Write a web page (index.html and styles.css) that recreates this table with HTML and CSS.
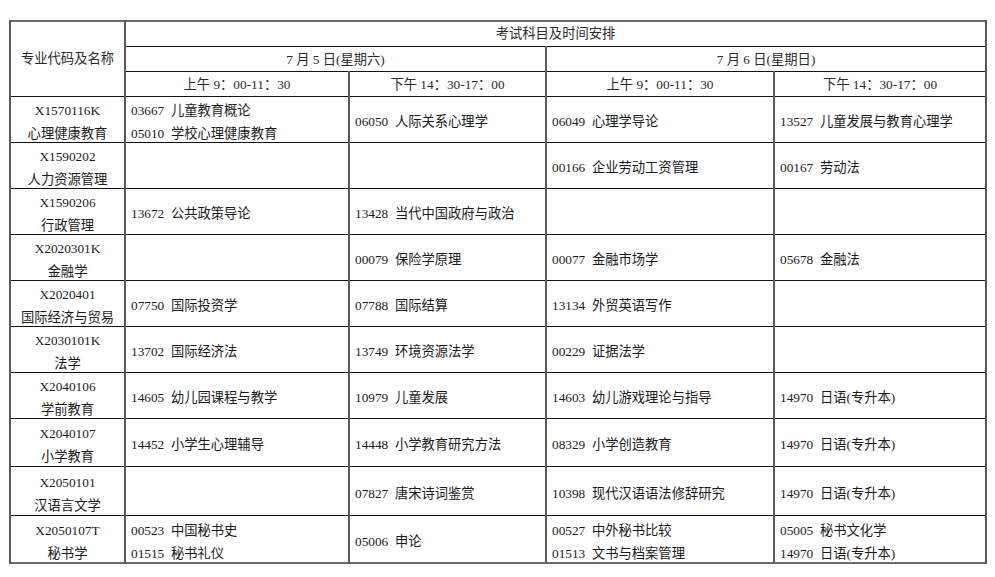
FILE: index.html
```html
<!DOCTYPE html>
<html lang="zh-CN">
<head>
<meta charset="utf-8">
<title>考试科目及时间安排</title>
<link rel="stylesheet" href="styles.css">
</head>
<body>
<table class="schedule">
  <colgroup>
    <col class="c-major">
    <col class="c-a">
    <col class="c-b">
    <col class="c-c">
    <col class="c-d">
  </colgroup>
  <thead>
    <tr class="h1">
      <th rowspan="3" class="major-head">专业代码及名称</th>
      <th colspan="4">考试科目及时间安排</th>
    </tr>
    <tr class="h2">
      <th colspan="2">7 月 5 日(星期六)</th>
      <th colspan="2">7 月 6 日(星期日)</th>
    </tr>
    <tr class="h3">
      <th>上午 9：00-11：30</th>
      <th>下午 14：30-17：00</th>
      <th>上午 9：00-11：30</th>
      <th>下午 14：30-17：00</th>
    </tr>
  </thead>
  <tbody>
    <tr class="r46">
      <td class="major multi"><div class="stack">X1570116K<br>心理健康教育</div></td>
      <td class="multi"><div class="stack">03667&nbsp;&nbsp;儿童教育概论<br>05010&nbsp;&nbsp;学校心理健康教育</div></td>
      <td>06050&nbsp;&nbsp;人际关系心理学</td>
      <td>06049&nbsp;&nbsp;心理学导论</td>
      <td>13527&nbsp;&nbsp;儿童发展与教育心理学</td>
    </tr>
    <tr class="r46">
      <td class="major multi"><div class="stack">X1590202<br>人力资源管理</div></td>
      <td></td>
      <td></td>
      <td>00166&nbsp;&nbsp;企业劳动工资管理</td>
      <td>00167&nbsp;&nbsp;劳动法</td>
    </tr>
    <tr class="r46">
      <td class="major multi"><div class="stack">X1590206<br>行政管理</div></td>
      <td>13672&nbsp;&nbsp;公共政策导论</td>
      <td>13428&nbsp;&nbsp;当代中国政府与政治</td>
      <td></td>
      <td></td>
    </tr>
    <tr class="r46">
      <td class="major multi"><div class="stack">X2020301K<br>金融学</div></td>
      <td></td>
      <td>00079&nbsp;&nbsp;保险学原理</td>
      <td>00077&nbsp;&nbsp;金融市场学</td>
      <td>05678&nbsp;&nbsp;金融法</td>
    </tr>
    <tr class="r46">
      <td class="major multi"><div class="stack">X2020401<br>国际经济与贸易</div></td>
      <td>07750&nbsp;&nbsp;国际投资学</td>
      <td>07788&nbsp;&nbsp;国际结算</td>
      <td>13134&nbsp;&nbsp;外贸英语写作</td>
      <td></td>
    </tr>
    <tr class="r46">
      <td class="major multi"><div class="stack">X2030101K<br>法学</div></td>
      <td>13702&nbsp;&nbsp;国际经济法</td>
      <td>13749&nbsp;&nbsp;环境资源法学</td>
      <td>00229&nbsp;&nbsp;证据法学</td>
      <td></td>
    </tr>
    <tr class="r46">
      <td class="major multi"><div class="stack">X2040106<br>学前教育</div></td>
      <td>14605&nbsp;&nbsp;幼儿园课程与教学</td>
      <td>10979&nbsp;&nbsp;儿童发展</td>
      <td>14603&nbsp;&nbsp;幼儿游戏理论与指导</td>
      <td>14970&nbsp;&nbsp;日语(专升本)</td>
    </tr>
    <tr class="r48">
      <td class="major multi"><div class="stack">X2040107<br>小学教育</div></td>
      <td>14452&nbsp;&nbsp;小学生心理辅导</td>
      <td>14448&nbsp;&nbsp;小学教育研究方法</td>
      <td>08329&nbsp;&nbsp;小学创造教育</td>
      <td>14970&nbsp;&nbsp;日语(专升本)</td>
    </tr>
    <tr class="r49">
      <td class="major multi"><div class="stack">X2050101<br>汉语言文学</div></td>
      <td></td>
      <td>07827&nbsp;&nbsp;唐宋诗词鉴赏</td>
      <td>10398&nbsp;&nbsp;现代汉语语法修辞研究</td>
      <td>14970&nbsp;&nbsp;日语(专升本)</td>
    </tr>
    <tr class="r48">
      <td class="major multi"><div class="stack">X2050107T<br>秘书学</div></td>
      <td class="multi"><div class="stack">00523&nbsp;&nbsp;中国秘书史<br>01515&nbsp;&nbsp;秘书礼仪</div></td>
      <td>05006&nbsp;&nbsp;申论</td>
      <td class="multi"><div class="stack">00527&nbsp;&nbsp;中外秘书比较<br>01513&nbsp;&nbsp;文书与档案管理</div></td>
      <td class="multi"><div class="stack">05005&nbsp;&nbsp;秘书文化学<br>14970&nbsp;&nbsp;日语(专升本)</div></td>
    </tr>
  </tbody>
</table>
</body>
</html>
```

FILE: styles.css
```css
html, body {
  background: #ffffff;
}

body {
  margin: 0;
  padding: 20px 0 0 9px;
  font-family: "Liberation Serif", "Noto Sans CJK SC", serif;
  font-size: 13.3px;
  color: #1a1a1a;
}

.schedule {
  border-collapse: collapse;
  table-layout: fixed;
  width: 976px;
  border: 2px solid #6b6b6b;
}

.c-major { width: 115px; }
.c-a { width: 224px; }
.c-b { width: 197px; }
.c-c { width: 228px; }
.c-d { width: 212px; }

.schedule th,
.schedule td {
  border-top: 1px solid #111;
  border-bottom: 1px solid #111;
  border-left: 2px solid #5a5a5a;
  border-right: 2px solid #5a5a5a;
  vertical-align: middle;
  white-space: nowrap;
}

.schedule th {
  font-weight: normal;
  text-align: center;
  color: #2a2a2a;
  line-height: 20px;
  padding: 0 6px;
}

.schedule .h2 th,
.schedule .h3 th {
  padding-top: 2px;
}

.schedule td {
  text-align: left;
  line-height: 23px;
  padding: 5px 6px 0 5px;
  overflow: hidden;
}

.schedule td.multi {
  padding-top: 0;
  overflow: visible;
}

.schedule td.major {
  text-align: center;
  padding-left: 0;
  padding-right: 0;
}

.stack {
  height: 40px;
  line-height: 23px;
}

.h1 { height: 25px; }
.h2 { height: 25px; }
.h3 { height: 25px; }
.r46 { height: 46px; }
.r48 { height: 48px; }
.r49 { height: 49px; }
```
